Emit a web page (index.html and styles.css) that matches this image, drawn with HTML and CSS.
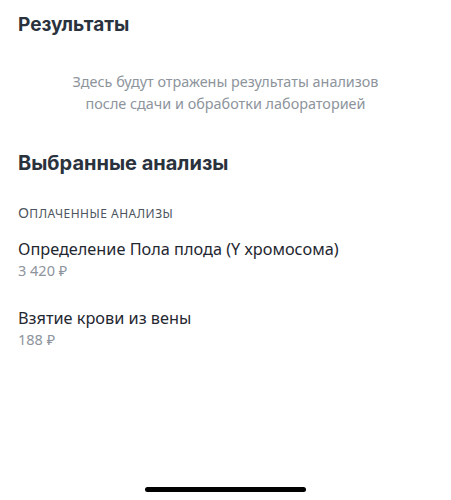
FILE: index.html
```html
<!DOCTYPE html>
<html lang="ru">
<head>
<meta charset="utf-8">
<link rel="stylesheet" href="styles.css">
</head>
<body>
<div class="screen">
  <h1 class="title">Результаты</h1>
  <p class="empty">Здесь будут отражены результаты анализов<br>после сдачи и обработки лабораторией</p>
  <h2 class="section">Выбранные анализы</h2>
  <div class="label"><span class="cap">О</span>плаченные анализы</div>
  <div class="item">
    <div class="name">Определение Пола плода (Y хромосома)</div>
    <div class="price">3 420 ₽</div>
  </div>
  <div class="item">
    <div class="name">Взятие крови из вены</div>
    <div class="price">188 ₽</div>
  </div>
  <div class="home"></div>
</div>
</body>
</html>
```

FILE: styles.css
```css
html, body { margin: 0; padding: 0; background: #fff; }
.screen {
  width: 451px; height: 500px; position: relative;
  font-family: "Noto Sans", "Open Sans", sans-serif;
  padding: 12px 18px 0; box-sizing: border-box;
}
.title {
  margin: 0; font-family: "Inter", "Noto Sans", sans-serif;
  font-weight: 700; font-size: 19px; line-height: 26px; color: #2a323d;
}
.empty {
  margin: 33px 0 0; text-align: center; font-size: 14.4px; line-height: 22px; color: #8d949c;
}
.section {
  margin: 34px 0 0; font-family: "Inter", "Noto Sans", sans-serif;
  font-weight: 700; font-size: 20px; line-height: 28px; color: #2a323d;
}
.label {
  margin-top: 26px; text-transform: uppercase; font-size: 12px; line-height: 18px; color: #4d5560;
  letter-spacing: 0.5px;
}
.label .cap { font-size: 14.5px; letter-spacing: 0.3px; }
.item { margin-top: 14px; }
.item + .item { margin-top: 26px; }
.name { font-size: 16.3px; line-height: 24px; color: #1f2731; }
.price { font-size: 14.5px; line-height: 20px; color: #8d949c; margin-top: -1px; }
.home {
  position: absolute; left: 145px; top: 487px; width: 161px; height: 5px;
  border-radius: 3px; background: #000;
}
```
